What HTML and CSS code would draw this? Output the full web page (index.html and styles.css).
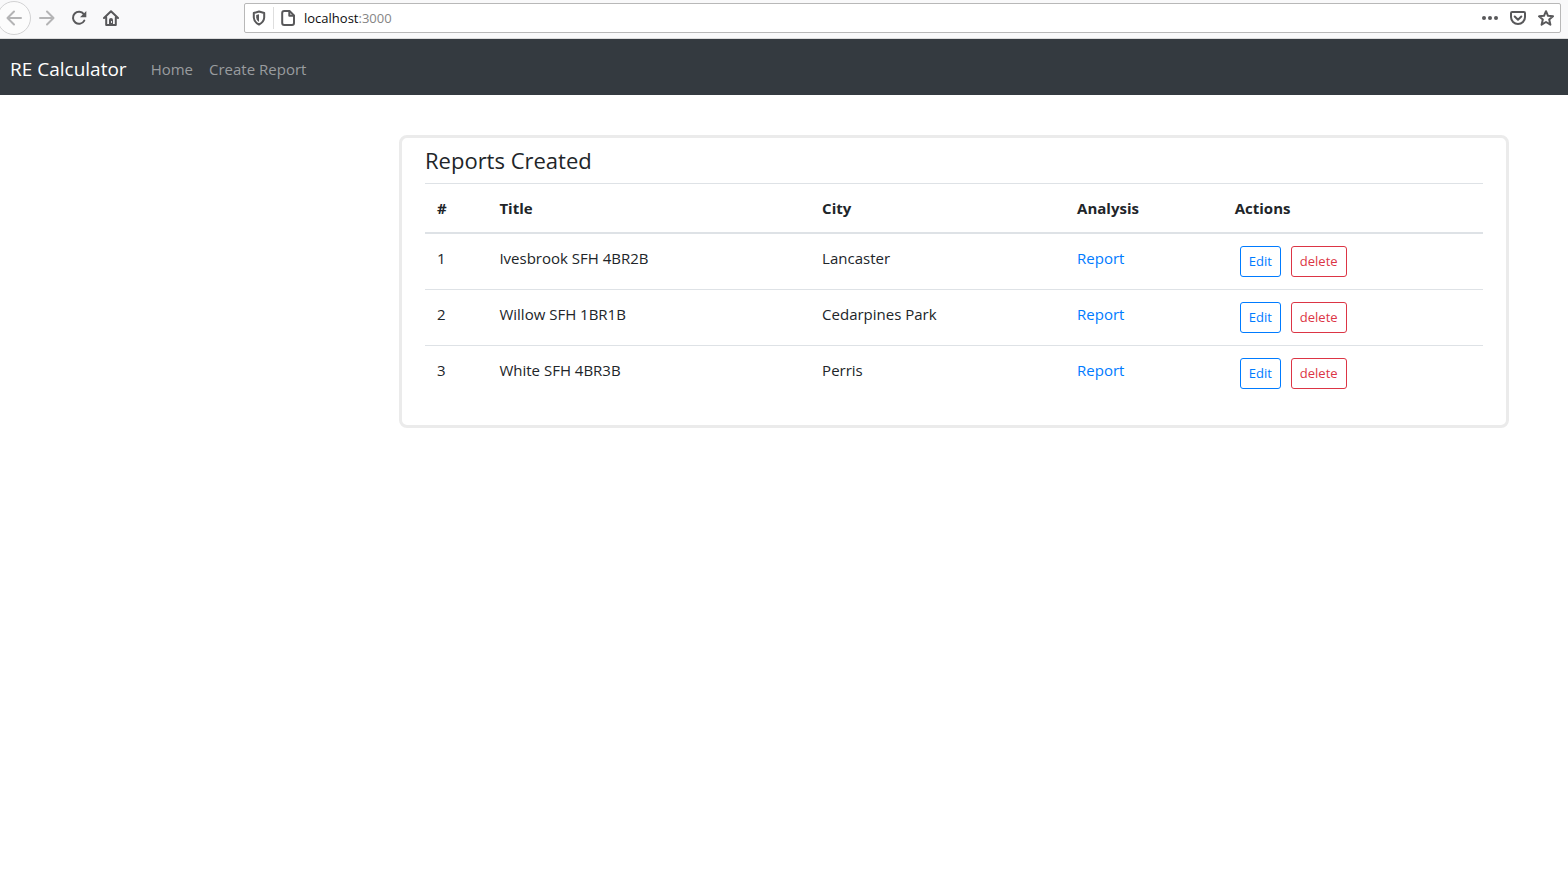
FILE: index.html
```html
<!DOCTYPE html>
<html lang="en">
<head>
<meta charset="utf-8">
<title>RE Calculator</title>
<link rel="stylesheet" href="styles.css">
</head>
<body>
<header class="toolbar">
  <div class="toolbar-buttons">
    <button class="tool back" aria-label="Back" disabled><svg width="16" height="16" viewBox="0 0 16 16"><path d="M15 8H2M8 1.500L1.500 8L8 14.500"/></svg></button>
    <button class="tool forward" aria-label="Forward" disabled><svg width="16" height="16" viewBox="0 0 16 16"><path d="M1 8H14M8 1.500L14.500 8L8 14.500"/></svg></button>
    <button class="tool" aria-label="Reload"><svg width="16" height="16" viewBox="0 0 16 16"><path d="M12.800 4.200A6 6 0 1 0 13.300 10.600"/><path class="solid" d="M15.300 1V7.200H9Z"/></svg></button>
    <button class="tool" aria-label="Home page"><svg width="16" height="16" viewBox="0 0 16 16"><path d="M1 8L8 1.200L15 8M3.200 7.500V15H12.800V7.500"/><path class="solid" d="M6 15V10Q6 8 8 8T10 10V15Z"/><path class="hole" d="M8.500 11.500V12.500"/></svg></button>
  </div>
  <div class="address">
    <svg class="shield" width="16" height="16" viewBox="0 0 16 16"><path d="M8 1.500L13.200 3V7.500Q13 12 8 14.500Q3 12 2.800 7.500V3Z"/><path class="solid" d="M8 4.200V12Q5.200 10.200 5.200 7.500V5Z"/></svg>
    <span class="divider"></span>
    <svg width="16" height="16" viewBox="0 0 16 16"><path d="M4.200 1H9.500L14 5.500V13Q14 15 12 15H4.200Q2.200 15 2.200 13V3Q2.200 1 4.200 1Z"/><path d="M9.300 1.500V5.700H13.500"/></svg>
    <span class="url">localhost<span class="port">:3000</span></span>
    <div class="page-actions">
      <button class="action" aria-label="Page actions"><svg width="16" height="16" viewBox="0 0 16 16"><circle class="dot" cx="2" cy="8" r="2"/><circle class="dot" cx="8" cy="8" r="2"/><circle class="dot" cx="14" cy="8" r="2"/></svg></button>
      <button class="action" aria-label="Save to Pocket"><svg width="16" height="16" viewBox="0 0 16 16"><path d="M2.200 2H13.800Q15 2 15 3.200V7A7 7 0 0 1 1 7V3.200Q1 2 2.200 2Z"/><path d="M4.700 6.500L8 9.700L11.300 6.500"/></svg></button>
      <button class="action" aria-label="Bookmark"><svg width="16" height="16" viewBox="0 0 16 16"><path d="M8 1.200L10 5.800L15 6.300L11.200 9.600L12.400 14.700L8 12L3.600 14.700L4.800 9.600L1 6.300L6 5.800Z"/></svg></button>
    </div>
  </div>
</header>
<nav class="navbar">
  <a class="brand" href="#">RE Calculator</a>
  <a class="nav-link" href="#">Home</a>
  <a class="nav-link" href="#">Create Report</a>
</nav>
<main class="content">
  <section class="card">
    <h1 class="card-title">Reports Created</h1>
    <table class="reports">
      <colgroup><col class="col-number"><col class="col-title"><col class="col-city"><col class="col-analysis"><col></colgroup>
      <thead>
        <tr><th scope="col">#</th><th scope="col">Title</th><th scope="col">City</th><th scope="col">Analysis</th><th scope="col">Actions</th></tr>
      </thead>
      <tbody>
        <tr><td>1</td><td>Ivesbrook SFH 4BR2B</td><td>Lancaster</td><td><a class="report-link" href="#">Report</a></td><td><div class="actions"><button class="btn btn-edit">Edit</button><button class="btn btn-delete">delete</button></div></td></tr>
        <tr><td>2</td><td>Willow SFH 1BR1B</td><td>Cedarpines Park</td><td><a class="report-link" href="#">Report</a></td><td><div class="actions"><button class="btn btn-edit">Edit</button><button class="btn btn-delete">delete</button></div></td></tr>
        <tr><td>3</td><td>White SFH 4BR3B</td><td>Perris</td><td><a class="report-link" href="#">Report</a></td><td><div class="actions"><button class="btn btn-edit">Edit</button><button class="btn btn-delete">delete</button></div></td></tr>
      </tbody>
    </table>
  </section>
</main>
</body>
</html>
```
FILE: styles.css
```css
* {
  box-sizing: border-box;
}

body {
  margin: 0;
  background: #fff;
  color: #212529;
  font: 15px/24px "Open Sans", "Noto Sans", sans-serif;
}

button {
  font-family: inherit;
  cursor: pointer;
}

svg {
  display: block;
  flex: none;
  fill: none;
  stroke: #58585a;
  stroke-width: 2;
  stroke-linejoin: round;
  stroke-linecap: round;
}

.solid {
  fill: #58585a;
  stroke: none;
}

.dot {
  fill: #58585a;
  stroke: none;
}

.hole {
  stroke: #f9f9fa;
  stroke-width: 1;
}

.toolbar {
  display: flex;
  align-items: center;
  height: 39px;
  padding: 0 7px 3px 0;
  background: #f9f9fa;
  border-bottom: 1px solid #dcdcdc;
}

.toolbar-buttons {
  display: flex;
  flex: none;
  align-items: center;
  width: 244px;
  overflow: hidden;
}

.tool {
  display: flex;
  align-items: center;
  justify-content: center;
  width: 32px;
  height: 34px;
  padding: 0;
  border: 0;
  background: none;
}

.back {
  width: 34px;
  margin-left: -3px;
  border: 1px solid #d2d2d3;
  border-radius: 50%;
  background: #fcfcfc;
}

.back svg,
.forward svg {
  stroke: #b4b4b5;
}

.address {
  display: flex;
  flex: 1;
  align-items: center;
  height: 30px;
  padding: 0 6px;
  border: 1px solid #b8b8b8;
  border-radius: 2px;
  background: #fff;
}

.divider {
  width: 1px;
  height: 22px;
  margin: 0 6px;
  background: #dedede;
}

.url {
  margin-left: 8px;
  color: #0c0c0d;
  font-size: 13px;
}

.port {
  color: #858585;
}

.page-actions {
  display: flex;
  gap: 12px;
  margin-left: auto;
}

.action {
  padding: 0;
  border: 0;
  background: none;
}

.navbar {
  display: flex;
  align-items: center;
  min-height: 56px;
  padding: 8px 10px 4px;
  background: #343a40;
}

.brand {
  margin-right: 16px;
  color: #fff;
  font-size: 19px;
  line-height: 30px;
  text-decoration: none;
}

.nav-link {
  padding: 8px;
  color: #999c9f;
  text-decoration: none;
}

.content {
  margin-left: 25%;
  padding: 40px 59px 40px 7px;
}

.card {
  padding: 8px 23px;
  border: 3px solid #ebebeb;
  border-radius: 8px;
}

.card-title {
  margin: 0 0 8px;
  font-size: 22px;
  font-weight: 400;
  line-height: 29px;
}

.reports {
  width: 100%;
  margin-bottom: 16px;
  border-collapse: collapse;
  table-layout: fixed;
}

.col-number {
  width: 5.9%;
}

.col-title {
  width: 30.5%;
}

.col-city {
  width: 24.1%;
}

.col-analysis {
  width: 14.9%;
}

.reports th,
.reports td {
  padding: 12px;
  border-top: 1px solid #dee2e6;
  text-align: left;
  vertical-align: top;
}

.reports th {
  border-bottom: 2px solid #dee2e6;
  font-weight: 700;
}

.report-link {
  color: #007bff;
  text-decoration: none;
}

.actions {
  display: flex;
  gap: 10px;
  padding-left: 5px;
}

.btn {
  padding: 4px 8px;
  border: 1px solid;
  border-radius: 3px;
  background: transparent;
  font-size: 13px;
  line-height: 21px;
}

.btn-edit {
  color: #007bff;
}

.btn-delete {
  color: #dc3545;
}
```
